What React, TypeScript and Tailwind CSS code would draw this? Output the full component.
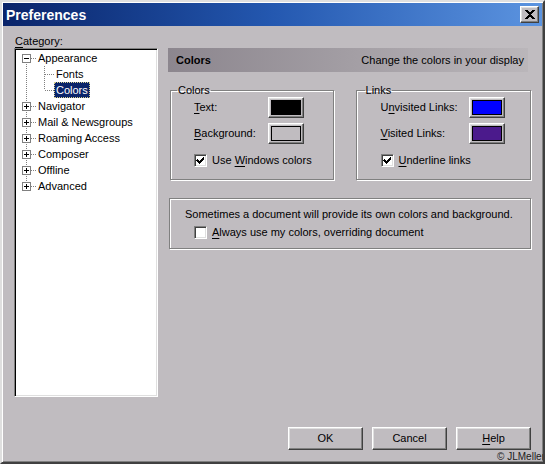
import React from 'react';

const raised =
  'border border-t-white border-l-white border-r-[#404040] border-b-[#404040] shadow-[inset_-1px_-1px_0_#808080,inset_1px_1px_0_#dfdfdf]';

function U({ children }: { children: React.ReactNode }) {
  return <span className="underline underline-offset-[2px] decoration-[1px]">{children}</span>;
}

function Check({ checked }: { checked?: boolean }) {
  return (
    <span className="w-[13px] h-[13px] bg-white border border-t-[#808080] border-l-[#808080] border-r-white border-b-white shadow-[inset_1px_1px_0_#404040,inset_-1px_-1px_0_#dfdfdf] flex items-center justify-center shrink-0">
      {checked && (
        <svg width="9" height="9" viewBox="0 0 9 9" shapeRendering="crispEdges">
          <path d="M1 3h1v1h1v1h1v-1h1v-1h1v-1h1v-1h1v3h-1v1h-1v1h-1v1h-1v1h-1v-1h-1v-1h-1v-1h-1z" fill="#000" />
        </svg>
      )}
    </span>
  );
}

function Swatch({ color }: { color: string }) {
  return (
    <button className={`w-[36px] h-[21px] p-[2px] bg-[#c0bcc0] ${raised}`}>
      <span className="block w-full h-full border border-black" style={{ background: color }} />
    </button>
  );
}

type Pos = 'first' | 'mid' | 'last';

function RootGutter({ pos, expander }: { pos: Pos; expander?: '+' | '-' }) {
  const y1 = pos === 'first' ? 8 : 0;
  const y2 = pos === 'last' ? 8 : 16;
  return (
    <svg width="19" height="16" viewBox="0 0 19 16" shapeRendering="crispEdges" className="shrink-0">
      <line x1="9.5" y1={y1} x2="9.5" y2={y2} stroke="#808080" strokeDasharray="1 1" />
      {expander && (
        <>
          <line x1="14" y1="8.5" x2="19" y2="8.5" stroke="#808080" strokeDasharray="1 1" />
          <rect x="5.5" y="4.5" width="8" height="8" fill="#fff" stroke="#808080" />
          <line x1="7" y1="8.5" x2="12" y2="8.5" stroke="#000" />
          {expander === '+' && <line x1="9.5" y1="6" x2="9.5" y2="11" stroke="#000" />}
        </>
      )}
    </svg>
  );
}

function ChildGutter({ last }: { last?: boolean }) {
  return (
    <svg width="18" height="16" viewBox="0 0 18 16" shapeRendering="crispEdges" className="shrink-0">
      <line x1="8.5" y1="0" x2="8.5" y2={last ? 8 : 16} stroke="#808080" strokeDasharray="1 1" />
      <line x1="9" y1="8.5" x2="18" y2="8.5" stroke="#808080" strokeDasharray="1 1" />
    </svg>
  );
}

function Label({ text, selected }: { text: string; selected?: boolean }) {
  return (
    <span
      className={`h-[16px] leading-[14px] px-[1px] border whitespace-nowrap ${
        selected ? 'bg-[#0a246a] text-white border-dotted border-[#d8d090]' : 'border-transparent'
      }`}
    >
      {text}
    </span>
  );
}

const roots = ['Navigator', 'Mail & Newsgroups', 'Roaming Access', 'Composer', 'Offline', 'Advanced'];

function Tree() {
  return (
    <div className="w-[144px] h-[349px] bg-white border border-t-[#808080] border-l-[#808080] border-r-white border-b-white shadow-[inset_1px_1px_0_#000,inset_-1px_-1px_0_#dfdfdf] p-[1px] pl-[2px]">
      <div className="flex items-center h-[16px]">
        <RootGutter pos="first" expander="-" />
        <Label text="Appearance" />
      </div>
      <div className="flex items-center h-[16px]">
        <RootGutter pos="mid" />
        <ChildGutter />
        <Label text="Fonts" />
      </div>
      <div className="flex items-center h-[16px]">
        <RootGutter pos="mid" />
        <ChildGutter last />
        <Label text="Colors" selected />
      </div>
      {roots.map((r, i) => (
        <div key={r} className="flex items-center h-[16px]">
          <RootGutter pos={i === roots.length - 1 ? 'last' : 'mid'} expander="+" />
          <Label text={r} />
        </div>
      ))}
    </div>
  );
}

const etched = 'border border-[#808080] shadow-[inset_1px_1px_0_#fff,1px_1px_0_#fff]';

export default function App() {
  return (
    <div className="w-[545px] h-[464px] relative flex flex-col bg-[#c0bcc0] border-2 border-t-[#dfdfdf] border-l-[#dfdfdf] border-r-[#404040] border-b-[#404040] shadow-[inset_1px_1px_0_#fff,inset_-1px_-1px_0_#808080] p-[1px] font-['Liberation_Sans',Arial,sans-serif] text-[11px] text-black overflow-hidden">
      {/* Title bar */}
      <div className="h-[23px] flex items-center justify-between pl-[3px] pr-[3px] bg-gradient-to-r from-[#0a246a] via-[#2458b0] to-[#5c94e0]">
        <span className="text-white font-bold text-[14px] leading-none">Preferences</span>
        <button className={`w-[19px] h-[17px] bg-[#c0bcc0] flex items-center justify-center ${raised}`}>
          <svg width="10" height="9" viewBox="0 0 10 9" shapeRendering="crispEdges">
            <path d="M0 0h2.2l2.8 3L7.8 0H10L6.2 4.5L10 9H7.8L5 6L2.2 9H0l3.8-4.5z" fill="#000" />
          </svg>
        </button>
      </div>

      {/* Body */}
      <div className="flex-1 flex flex-col pl-[11px] pr-[11px] pt-[8px]">
        <div className="flex gap-[10px]">
          <div className="flex flex-col">
            <div className="h-[14px] leading-[14px] pl-[1px]">
              <U>C</U>ategory:
            </div>
            <Tree />
          </div>

          <div className="w-[363px] pt-[14px] flex flex-col">
            <div className="w-[360px] h-[24px] flex items-center justify-between px-[8px] pr-[4px] bg-gradient-to-r from-[#8c868e] to-[#bab6ba]">
              <span className="font-bold">Colors</span>
              <span>Change the colors in your display</span>
            </div>

            <div className="flex mt-[12px] ml-[2px] gap-[22px]">
              <fieldset className={`w-[164px] h-[96px] p-0 ${etched}`}>
                <legend className="ml-[6px] px-[1px] leading-[12px]">Colors</legend>
                <div className="pl-[23px] pt-[1px] flex flex-col">
                  <div className="flex items-center h-[21px]">
                    <span className="w-[74px]">
                      <U>T</U>ext:
                    </span>
                    <Swatch color="#000000" />
                  </div>
                  <div className="flex items-center h-[21px] mt-[5px]">
                    <span className="w-[74px]">
                      <U>B</U>ackground:
                    </span>
                    <Swatch color="#c0bcc0" />
                  </div>
                  <div className="flex items-center h-[15px] mt-[9px] gap-[5px]">
                    <Check checked />
                    <span>
                      Use <U>W</U>indows colors
                    </span>
                  </div>
                </div>
              </fieldset>

              <fieldset className={`w-[176px] h-[96px] p-0 ${etched}`}>
                <legend className="ml-[8px] px-[1px] leading-[12px]">Links</legend>
                <div className="pl-[24px] pt-[1px] flex flex-col">
                  <div className="flex items-center h-[21px]">
                    <span className="w-[88px]">
                      U<U>n</U>visited Links:
                    </span>
                    <Swatch color="#0000ff" />
                  </div>
                  <div className="flex items-center h-[21px] mt-[5px]">
                    <span className="w-[88px]">
                      <U>V</U>isited Links:
                    </span>
                    <Swatch color="#4b1a8c" />
                  </div>
                  <div className="flex items-center h-[15px] mt-[9px] gap-[5px]">
                    <Check checked />
                    <span>
                      <U>U</U>nderline links
                    </span>
                  </div>
                </div>
              </fieldset>
            </div>

            <div className={`ml-[1px] mt-[18px] w-[362px] h-[51px] pl-[15px] pt-[9px] ${etched}`}>
              <div className="leading-[12px]">Sometimes a document will provide its own colors and background.</div>
              <div className="flex items-center h-[15px] mt-[5px] ml-[9px] gap-[5px]">
                <Check />
                <span>
                  <U>A</U>lways use my colors, overriding document
                </span>
              </div>
            </div>
          </div>
        </div>

        {/* Buttons */}
        <div className="mt-auto mb-[11px] flex justify-end gap-[9px]">
          <button className={`w-[75px] h-[23px] bg-[#c0bcc0] ${raised}`}>OK</button>
          <button className={`w-[75px] h-[23px] bg-[#c0bcc0] ${raised}`}>Cancel</button>
          <button className={`w-[75px] h-[23px] bg-[#c0bcc0] ${raised}`}>
            <U>H</U>elp
          </button>
        </div>
      </div>

      <span className="absolute right-[-2px] bottom-[0px] text-[10px] leading-[10px] text-[#202020]">© JLMeller</span>
    </div>
  );
}
